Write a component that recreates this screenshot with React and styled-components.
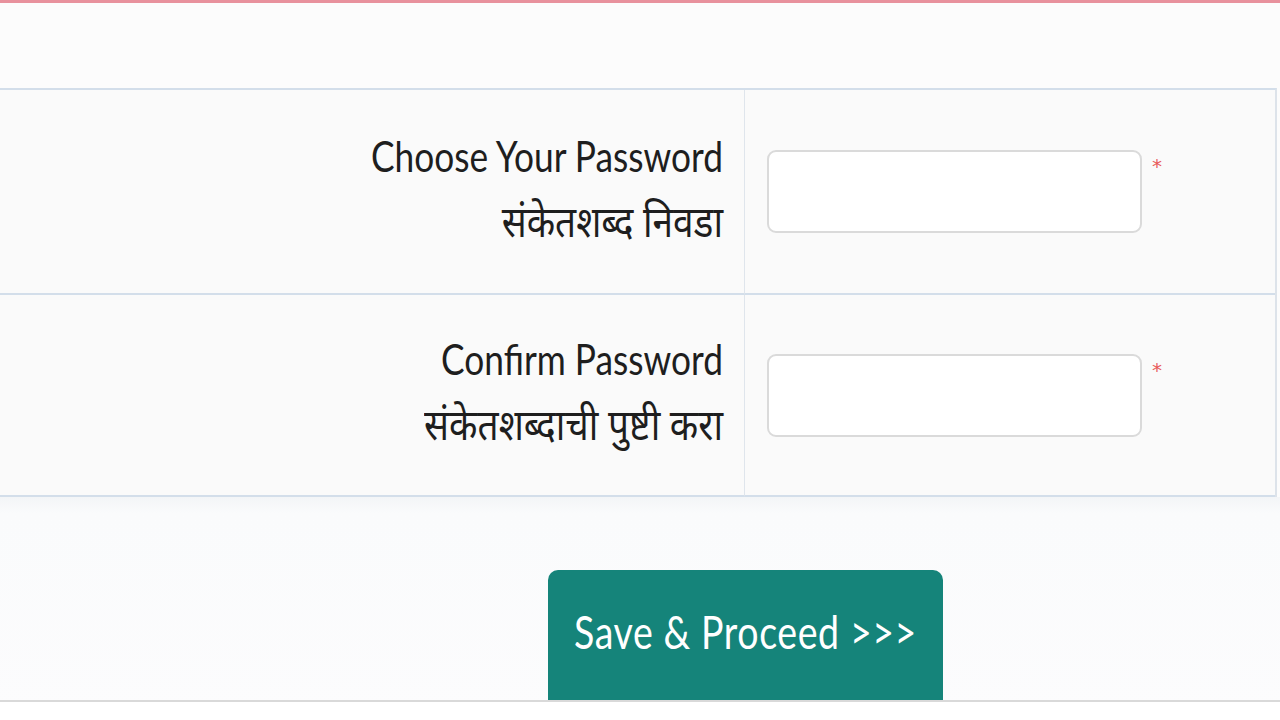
import React from "react";
import styled, { createGlobalStyle } from "styled-components";

const Global = createGlobalStyle`
  html, body { margin: 0; padding: 0; background: #fcfcfc; }
  body { width: 1280px; height: 720px; overflow: hidden; font-family: "Lato", "Noto Sans", sans-serif; }
`;

const Page = styled.div`
  width: 1280px;
  height: 720px;
  border-top: 3px solid #e8919d;
  box-sizing: border-box;
  background: #fcfcfc;
  display: flex;
  flex-direction: column;
`;

const Spacer = styled.div`
  height: ${(p) => p.$h}px;
  flex: none;
`;

const Table = styled.div`
  display: grid;
  grid-template-columns: 745px 1fr;
  border-top: 2px solid #d3deea;
  border-right: 2px solid #dde3ea;
  margin-right: 3px;
  background: #fafafa;
  flex: none;
`;

const LabelCell = styled.div`
  height: ${(p) => p.$h}px;
  box-sizing: border-box;
  border-bottom: 2px solid #d3deea;
  border-right: 1px solid #dfe5ec;
  display: flex;
  flex-direction: column;
  align-items: flex-end;
  justify-content: center;
  padding-right: 21px;
  color: #1e1e1e;
`;

const LabelEn = styled.div`
  font-family: "Lato", sans-serif;
  font-size: 35.3px;
  line-height: 58px;
  transform: scaleY(1.22);
`;

const LabelMr = styled.div`
  font-family: "Noto Sans", "Noto Sans Devanagari", sans-serif;
  font-size: 37px;
  line-height: 72px;
  transform: scaleY(1.15);
`;

const InputCell = styled.div`
  height: ${(p) => p.$h}px;
  box-sizing: border-box;
  border-bottom: 2px solid #d3deea;
  display: flex;
  align-items: flex-start;
  padding-left: 22px;
  padding-top: ${(p) => p.$pt}px;
`;

const Input = styled.input`
  width: 375px;
  height: 83px;
  box-sizing: border-box;
  border: 2px solid #dadada;
  border-radius: 9px;
  background: #fff;
  outline: none;
`;

const Required = styled.span`
  color: #e85a5a;
  font-size: 20px;
  margin-left: 10px;
  margin-top: 4px;
  font-family: "DejaVu Sans", sans-serif;
`;

const Footer = styled.div`
  flex: 1;
  display: flex;
  flex-direction: column;
  background: linear-gradient(#f3f5f7 0, #fafbfc 16px, #fcfcfd 100%);
`;

const ButtonRow = styled.div`
  flex: 1;
  padding-left: 548px;
  border-bottom: 2px solid #d9d9d9;
  display: flex;
  align-items: flex-end;
`;

const Button = styled.button`
  width: 395px;
  height: 130px;
  border: none;
  border-radius: 10px 10px 0 0;
  background: #15847a;
  color: #ffffff;
  font-family: "Lato", sans-serif;
  font-size: 37.5px;
  letter-spacing: 0.6px;
  padding: 0 0 10px 0;
  cursor: pointer;
  span { display: inline-block; transform: scaleY(1.25); }
`;

const Bottom = styled.div`
  height: 18px;
  background: #ffffff;
`;

const rows = [
  { en: "Choose Your Password", mr: "संकेतशब्द निवडा", h: 205, pt: 60 },
  { en: "Confirm Password", mr: "संकेतशब्दाची पुष्टी करा", h: 202, pt: 59 },
];

export default function App() {
  return (
    <>
      <Global />
      <Page>
        <Spacer $h={85} />
        <Table>
          {rows.map((r) => (
            <React.Fragment key={r.en}>
              <LabelCell $h={r.h}>
                <LabelEn>{r.en}</LabelEn>
                <LabelMr>{r.mr}</LabelMr>
              </LabelCell>
              <InputCell $h={r.h} $pt={r.pt}>
                <Input type="password" />
                <Required>*</Required>
              </InputCell>
            </React.Fragment>
          ))}
        </Table>
        <Footer>
          <ButtonRow>
            <Button>
              <span>Save &amp; Proceed &gt;&gt;&gt;</span>
            </Button>
          </ButtonRow>
          <Bottom />
        </Footer>
      </Page>
    </>
  );
}
